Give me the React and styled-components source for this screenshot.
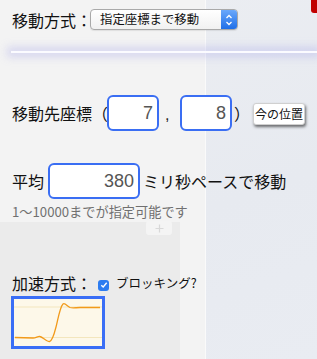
import React from "react";
import styled, { createGlobalStyle } from "styled-components";

const Global = createGlobalStyle`
  html, body { margin: 0; padding: 0; }
  body {
    width: 317px;
    height: 359px;
    overflow: hidden;
    font-family: "Noto Sans CJK JP", "Noto Sans", sans-serif;
    color: #111;
  }
`;

const Page = styled.div`
  position: relative;
  width: 317px;
  height: 359px;
  box-sizing: border-box;
  padding: 9px 0 0 12px;
  background:
    linear-gradient(#ebebeb, #ebebeb) 0 222px / 180px 140px no-repeat,
    linear-gradient(to right, #f3f3f3 0, #f3f3f3 205px, #fafafa 205px, #fafafa 206px, transparent 206px),
    linear-gradient(160deg, #eceef2 0%, #e7eaf0 60%, #e9ecf2 100%);
`;

const Corner = styled.div`
  position: absolute;
  top: 0;
  right: 0;
  width: 6px;
  height: 13px;
  background: #c10000;
  border-bottom-left-radius: 3px;
`;

const Ghost = styled.div`
  position: absolute;
  left: 146px;
  top: 221px;
  width: 26px;
  height: 14px;
  border-radius: 3px;
  background: #f4f4f4;
  display: flex;
  align-items: center;
  justify-content: center;
`;

const Row = styled.div`
  display: flex;
  align-items: center;
  height: ${(p) => p.$h}px;
  margin-top: ${(p) => p.$mt || 0}px;
`;

const Label = styled.span`
  font-size: 16px;
  line-height: 20px;
  white-space: nowrap;
  width: ${(p) => (p.$w ? `${p.$w}px` : "auto")};
  margin-left: ${(p) => p.$ml || 0}px;
  flex: none;
`;

const Select = styled.div`
  display: flex;
  align-items: stretch;
  width: 148px;
  height: 21px;
  box-sizing: border-box;
  border: 1px solid #a9a9a9;
  border-radius: 4px;
  background: linear-gradient(#ffffff, #f1f1f1);
  box-shadow: 0 1px 1px rgba(0, 0, 0, 0.08);
  overflow: hidden;
`;

const SelectText = styled.span`
  flex: 1;
  padding-left: 9px;
  font-size: 12.4px;
  line-height: 19px;
  color: #111;
`;

const Stepper = styled.span`
  width: 16px;
  display: flex;
  align-items: center;
  justify-content: center;
  background: linear-gradient(#6aa8fb, #1f6fe8);
`;

const Rule = styled.div`
  height: 2px;
  margin: 21px 0 0 -1px;
  background: #fbfbff;
  box-shadow: 0 0 9px 4px rgba(165, 165, 235, 0.38);
`;

const NumInput = styled.div`
  width: ${(p) => p.$w}px;
  height: 36px;
  box-sizing: border-box;
  border: 2px solid #3a6ef3;
  border-radius: 6px;
  background: #fff;
  margin-left: ${(p) => p.$ml || 0}px;
  padding-right: 4px;
  text-align: right;
  font: 18px/32px "Liberation Sans", "Noto Sans", sans-serif;
  color: #555;
  flex: none;
`;

const Comma = styled.span`
  width: 21px;
  padding-left: 6px;
  box-sizing: border-box;
  font: 16px/20px "Liberation Sans", sans-serif;
  color: #222;
  padding-top: 3px;
`;

const Paren = styled.span`
  font-size: 16px;
  line-height: 20px;
  margin-left: 2px;
  width: 19px;
`;

const CurButton = styled.div`
  width: 52px;
  height: 22px;
  box-sizing: border-box;
  margin-top: 2px;
  background: #fff;
  border: 1px solid #d0d0d0;
  border-radius: 3px;
  box-shadow: 1px 2px 3px rgba(0, 0, 0, 0.55);
  font-size: 12px;
  line-height: 20px;
  text-align: center;
  color: #111;
`;

const Hint = styled.div`
  margin-top: 5px;
  font-size: 13.2px;
  line-height: 16px;
  color: #707070;
`;

const Check = styled.span`
  width: 11px;
  height: 11px;
  border-radius: 3px;
  background: #2d7cf0;
  margin: 4px 7px 0 6px;
  display: flex;
  align-items: center;
  justify-content: center;
  flex: none;
`;

const Small = styled.span`
  font-size: 12.5px;
  line-height: 18px;
  color: #111;
`;

const Chart = styled.div`
  width: 94px;
  height: 53px;
  box-sizing: border-box;
  margin: 3px 0 0 -1px;
  border: 3px solid #3a6ef6;
  background: #fdf8e9;
  display: flex;
`;

export default function App() {
  return (
    <>
      <Global />
      <Page>
        <Corner />
        <Ghost>
          <svg width="9" height="9" viewBox="0 0 9 9">
            <path d="M4.5 0.5 V8.5 M0.5 4.5 H8.5" stroke="#d8d8d8" strokeWidth="1.2" />
          </svg>
        </Ghost>
        <Row $h={21}>
          <Label $w={78}>移動方式：</Label>
          <Select>
            <SelectText>指定座標まで移動</SelectText>
            <Stepper>
              <svg width="8" height="14" viewBox="0 0 8 14">
                <path d="M1.5 5 L4 2.5 L6.5 5 M1.5 9 L4 11.5 L6.5 9" fill="none" stroke="#fff" strokeWidth="1.3" />
              </svg>
            </Stepper>
          </Select>
        </Row>
        <Rule />
        <Row $h={36} $mt={42}>
          <Label>移動先座標（</Label>
          <NumInput $w={52} $ml={-1}>7</NumInput>
          <Comma>,</Comma>
          <NumInput $w={52}>8</NumInput>
          <Paren>）</Paren>
          <CurButton>今の位置</CurButton>
        </Row>
        <Row $h={36} $mt={32}>
          <Label>平均</Label>
          <NumInput $w={92} $ml={4}>380</NumInput>
          <Label $ml={3}>ミリ秒ペースで移動</Label>
        </Row>
        <Hint>1〜10000までが指定可能です</Hint>
        <Row $h={20} $mt={53}>
          <Label>加速方式：</Label>
          <Check>
            <svg width="8" height="8" viewBox="0 0 8 8">
              <path d="M1.3 4.2 L3.2 6 L6.7 1.8" fill="none" stroke="#fff" strokeWidth="1.4" />
            </svg>
          </Check>
          <Small>ブロッキング?</Small>
        </Row>
        <Chart>
          <svg width="88" height="47" viewBox="0 0 88 47">
            <line x1="0" y1="8" x2="88" y2="8" stroke="#f3e6bd" strokeWidth="1" />
            <line x1="0" y1="38.5" x2="88" y2="38.5" stroke="#f3e6bd" strokeWidth="1" />
            <path
              d="M1 38.5 L19 39 C22 39 24 37 26 37.5 C29 38 32 43 35.5 42.5 C38 42 40 36 42 28 C44 20 46 8 49 5 C51 3.5 53 7 56 8.5 C59 9.5 62 8.5 66 8.5 L86 8.5"
              fill="none"
              stroke="#f29a1a"
              strokeWidth="1.3"
            />
          </svg>
        </Chart>
      </Page>
    </>
  );
}
